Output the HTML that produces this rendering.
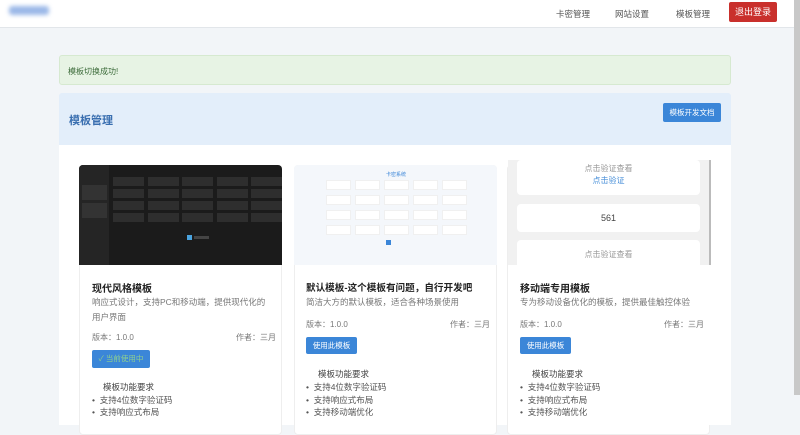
<!DOCTYPE html>
<html><head><meta charset="utf-8"><style>
*{margin:0;padding:0;box-sizing:border-box}
body{width:800px;height:420px;overflow:hidden;background:#f2f5f8;font-family:"Liberation Sans","Noto Sans CJK SC",sans-serif;position:relative;color:#333}
.a{position:absolute}
.nav{left:0;top:0;width:800px;height:28px;background:#fff;border-bottom:1px solid #e2e6ea}
.navt{font-size:8.5px;color:#555;top:8px}
.btnr{left:729px;top:2px;width:48px;height:20px;background:#c9302c;color:#fff;font-size:9px;text-align:center;line-height:20px;border-radius:2px}
.alert{left:59px;top:55px;width:672px;height:30px;background:#e7f3e4;border:1px solid #d6e9d0;border-radius:3px;font-size:8px;color:#3c6b3a;padding:10px 8px}
.ph{left:59px;top:93px;width:672px;height:53px;background:#e3eefa;border-radius:3px 3px 0 0}
.pb{left:59px;top:145px;width:672px;height:280px;background:#fff}
.card{background:#fff;border:1px solid #eee;border-radius:4px}
.t{font-size:10px;font-weight:bold;color:#222}
.d{font-size:8.5px;color:#777;line-height:15px}
.s{font-size:8px;color:#777}
.bb{background:#3b86d8;color:#fff;font-size:7.5px;text-align:center;border-radius:2px}
.f{font-size:8.5px;color:#444}
.li{font-size:8.5px;color:#555}
.cell{position:absolute;background:#2e2e2e;width:31px;height:9px}
.wc{position:absolute;background:#fff;width:25px;height:10px;border:1px solid #f0f0f0}
</style></head><body>
<div class="a nav"></div>
<div class="a" style="left:9px;top:6px;width:40px;height:9px;background:#9bb8e8;filter:blur(2px);border-radius:3px"></div>
<div class="a navt" style="left:556px">卡密管理</div>
<div class="a navt" style="left:615px">网站设置</div>
<div class="a navt" style="left:676px">模板管理</div>
<div class="a btnr">退出登录</div>
<div class="a" style="left:794px;top:0;width:6px;height:395px;background:#c8c8c8"></div>
<div class="a alert">模板切换成功!</div>
<div class="a ph"></div>
<div class="a" style="left:69px;top:112px;font-size:11px;color:#3a6fb0;font-weight:bold">模板管理</div>
<div class="a bb" style="left:663px;top:103px;width:58px;height:19px;line-height:19px">模板开发文档</div>
<div class="a pb"></div>

<!-- card1 -->
<div class="a card" style="left:79px;top:165px;width:203px;height:270px"></div>
<div class="a" style="left:79px;top:165px;width:203px;height:100px;background:#1b1b1b;border-radius:4px 4px 0 0;overflow:hidden">
<div class="a" style="left:0;top:0;width:30px;height:100px;background:#252525"></div>
<div class="a" style="left:3px;top:20px;width:25px;height:15px;background:#333"></div>
<div class="a" style="left:3px;top:38px;width:25px;height:15px;background:#333"></div>
<div id="g1"></div>
<div class="a" style="left:108px;top:70px;width:5px;height:5px;background:#4aa3df"></div>
<div class="a" style="left:115px;top:71px;width:15px;height:3px;background:#444"></div>
</div>
<div class="a t" style="left:92px;top:280px">现代风格模板</div>
<div class="a d" style="left:92px;top:295px;width:180px">响应式设计，支持PC和移动端，提供现代化的用户界面</div>
<div class="a s" style="left:92px;top:332px">版本：1.0.0</div>
<div class="a s" style="left:236px;top:332px">作者：三月</div>
<div class="a bb" style="left:92px;top:350px;width:58px;height:18px;line-height:18px;color:#8fd08f">✓ 当前使用中</div>
<div class="a f" style="left:103px;top:381px">模板功能要求</div>
<div class="a li" style="left:92px;top:394px">•&nbsp; 支持4位数字验证码</div>
<div class="a li" style="left:92px;top:406px">•&nbsp; 支持响应式布局</div>

<!-- card2 -->
<div class="a card" style="left:294px;top:165px;width:203px;height:270px"></div>
<div class="a" style="left:294px;top:165px;width:203px;height:100px;background:#f4f7fb;border-radius:4px 4px 0 0">
<div class="a" style="left:92px;top:6px;font-size:5px;color:#3b86d8">卡密系统</div>
<div id="g2"></div>
<div class="a" style="left:92px;top:75px;width:5px;height:5px;background:#3b86d8"></div>
</div>
<div class="a t" style="left:306px;top:280px;font-size:9.6px">默认模板-这个模板有问题，自行开发吧</div>
<div class="a d" style="left:306px;top:295px">简洁大方的默认模板，适合各种场景使用</div>
<div class="a s" style="left:306px;top:319px">版本：1.0.0</div>
<div class="a s" style="left:450px;top:319px">作者：三月</div>
<div class="a bb" style="left:306px;top:337px;width:51px;height:17px;line-height:17px">使用此模板</div>
<div class="a f" style="left:318px;top:368px">模板功能要求</div>
<div class="a li" style="left:306px;top:381px">•&nbsp; 支持4位数字验证码</div>
<div class="a li" style="left:306px;top:394px">•&nbsp; 支持响应式布局</div>
<div class="a li" style="left:306px;top:406px">•&nbsp; 支持移动端优化</div>

<!-- card3 -->
<div class="a card" style="left:507px;top:165px;width:203px;height:270px"></div>
<div class="a" style="left:508px;top:160px;width:203px;height:105px;background:#f1f1f1;border-right:2px solid #bbb">
<div class="a" style="left:9px;top:0;width:183px;height:35px;background:#fff;border-radius:4px;text-align:center;font-size:8px;color:#999;line-height:12px;padding-top:3px">点击验证查看<br><span style="color:#4a90d9">点击验证</span></div>
<div class="a" style="left:9px;top:44px;width:183px;height:28px;background:#fff;border-radius:4px;text-align:center;font-size:9px;color:#444;line-height:28px">561</div>
<div class="a" style="left:9px;top:80px;width:183px;height:30px;background:#fff;border-radius:4px;text-align:center;font-size:8px;color:#999;line-height:30px">点击验证查看</div>
</div>
<div class="a" style="left:508px;top:265px;width:203px;height:160px;background:#fff"></div>
<div class="a t" style="left:520px;top:280px">移动端专用模板</div>
<div class="a d" style="left:520px;top:295px">专为移动设备优化的模板，提供最佳触控体验</div>
<div class="a s" style="left:520px;top:319px">版本：1.0.0</div>
<div class="a s" style="left:664px;top:319px">作者：三月</div>
<div class="a bb" style="left:520px;top:337px;width:51px;height:17px;line-height:17px">使用此模板</div>
<div class="a f" style="left:532px;top:368px">模板功能要求</div>
<div class="a li" style="left:520px;top:381px">•&nbsp; 支持4位数字验证码</div>
<div class="a li" style="left:520px;top:394px">•&nbsp; 支持响应式布局</div>
<div class="a li" style="left:520px;top:406px">•&nbsp; 支持移动端优化</div>

<script>
var g1='',g2='';
for(var r=0;r<4;r++)for(var c=0;c<5;c++){
g1+='<div class="cell" style="left:'+(34+c*34.5)+'px;top:'+(12+r*12)+'px"></div>';
g2+='<div class="wc" style="left:'+(32+c*29)+'px;top:'+(15+r*15)+'px"></div>';}
document.getElementById('g1').outerHTML=g1;
document.getElementById('g2').outerHTML=g2;
</script>
</body></html>
